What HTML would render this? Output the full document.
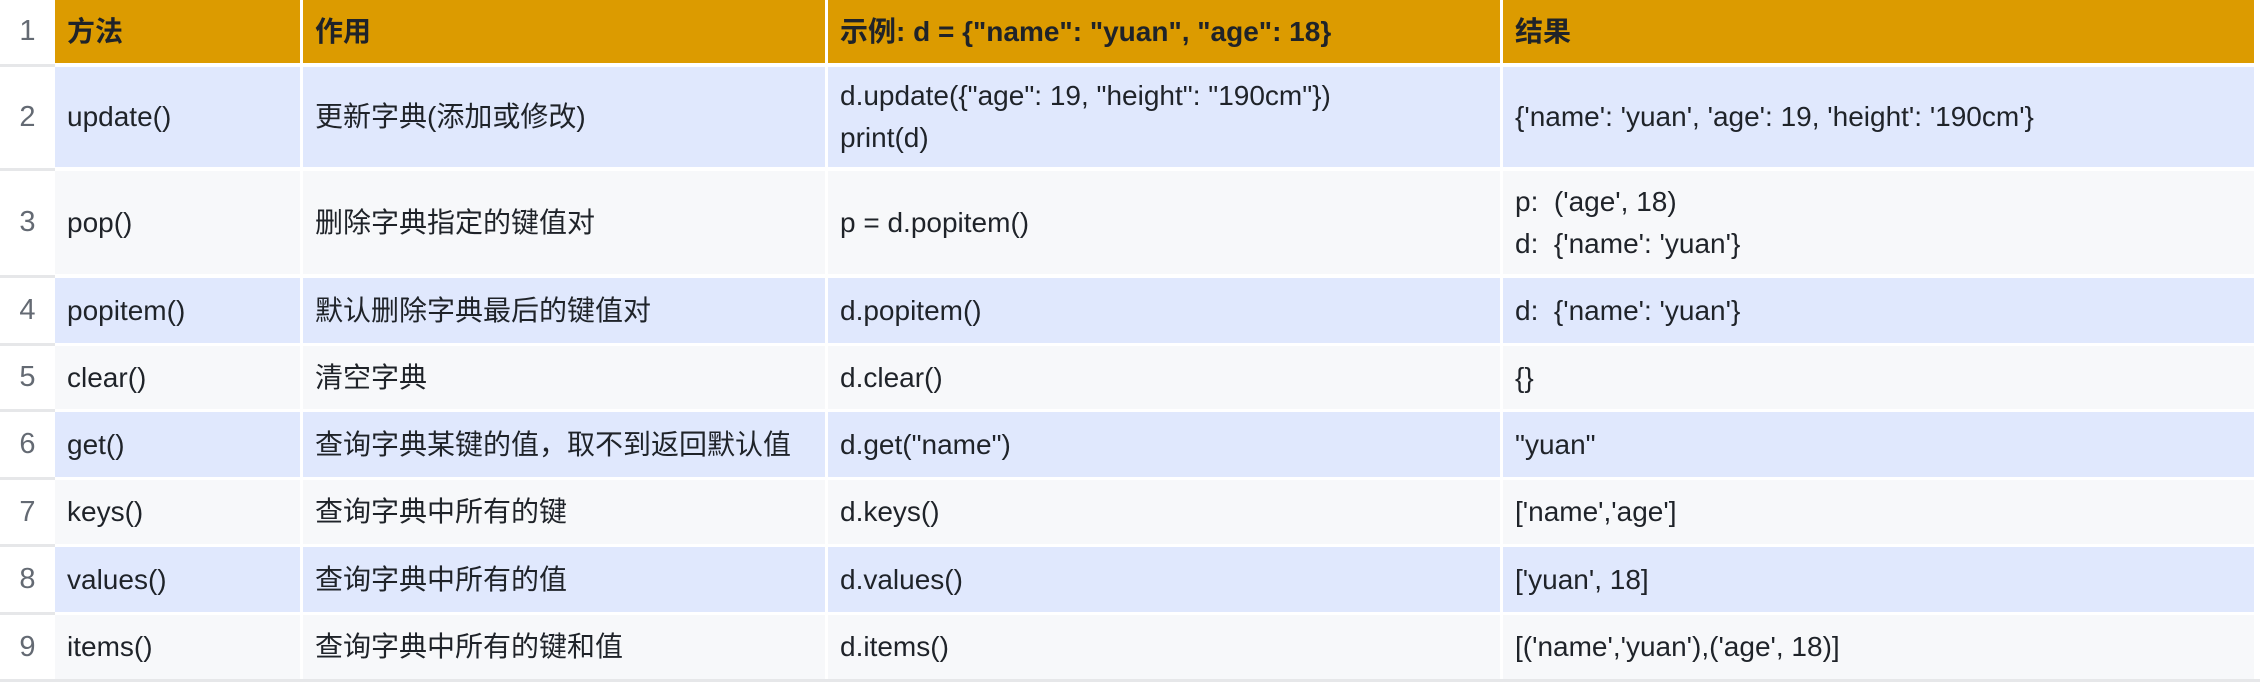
<!DOCTYPE html>
<html><head><meta charset="utf-8"><style>
*{margin:0;padding:0;box-sizing:border-box}
body{width:2260px;height:682px;background:#fff;position:relative;overflow:hidden;font-family:"Liberation Sans","Noto Sans CJK SC",sans-serif;font-size:28px;color:#1f2329}
.c{position:absolute;display:flex;flex-direction:column;justify-content:center;padding-left:12px;line-height:42px;white-space:nowrap}
.n{position:absolute;left:0;width:55px;background:#fff;color:#646a73;text-align:center;display:flex;align-items:center;justify-content:center;font-size:29px}
.s{position:absolute;left:0;width:55px;height:3px;background:#e6e7e9}
.h{background:#dc9b00;font-weight:bold}
.b{background:#e0e8fd}
.g{background:#f7f8fa}
</style></head><body>
<div id="t"></div>
<script>
var rows=[[0,63,'h',['方法','作用','示例:  d = {"name": "yuan", "age": 18}','结果']],
[67,167,'b',['update()','更新字典(添加或修改)','d.update({"age": 19, "height": "190cm"})<br>print(d)',"{'name': 'yuan', 'age': 19, 'height': '190cm'}"]],
[171,274,'g',['pop()','删除字典指定的键值对','p = d.popitem()',"p:&nbsp; ('age', 18)<br>d:&nbsp; {'name': 'yuan'}"]],
[278,343,'b',['popitem()','默认删除字典最后的键值对','d.popitem()',"d:&nbsp; {'name': 'yuan'}"]],
[346,409,'g',['clear()','清空字典','d.clear()','{}']],
[412,477,'b',['get()','查询字典某键的值，取不到返回默认值','d.get("name")','"yuan"']],
[480,544,'g',['keys()','查询字典中所有的键','d.keys()',"['name','age']"]],
[547,612,'b',['values()','查询字典中所有的值','d.values()',"['yuan', 18]"]],
[615,679,'g',['items()','查询字典中所有的键和值','d.items()',"[('name','yuan'),('age', 18)]"]]];
var cols=[[55,300],[303,825],[828,1500],[1503,2254]];
var h='';
rows.forEach(function(r,i){
 h+='<div class="n" style="top:'+r[0]+'px;height:'+(r[1]-r[0])+'px">'+(i+1)+'</div>';
 if(i) h+='<div class="s" style="top:'+(r[0]-3)+'px"></div>';
 cols.forEach(function(c,j){
  h+='<div class="c '+r[2]+'" style="left:'+c[0]+'px;width:'+(c[1]-c[0])+'px;top:'+r[0]+'px;height:'+(r[1]-r[0])+'px">'+r[3][j]+'</div>';
 });
});
document.getElementById('t').outerHTML=h;
</script>
<div style="position:absolute;left:0;top:679px;width:2260px;height:3px;background:#e6e7e9"></div>
</body></html>
